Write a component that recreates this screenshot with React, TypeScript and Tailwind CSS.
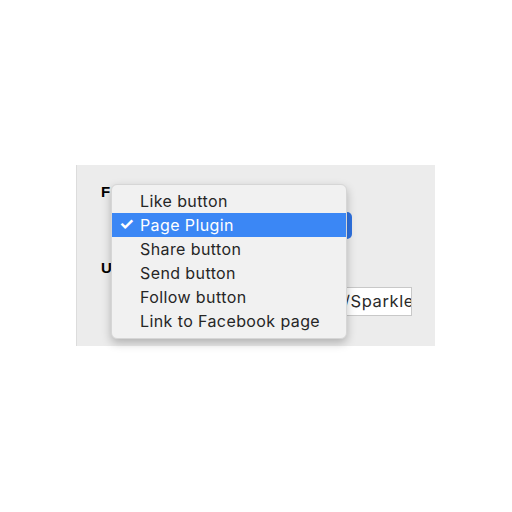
import React from "react";

const items = ["Like button", "Page Plugin", "Share button", "Send button", "Follow button", "Link to Facebook page"];

export default function App() {
  return (
    <div className="w-[512px] h-[512px] bg-white pt-[165px] pl-[76px]" style={{ fontFamily: "Inter, 'Liberation Sans', sans-serif" }}>
      <div className="relative w-[359px] h-[181px] bg-[#ececec] border-l border-[#dcdcdc] pl-[24px] pt-[20px] flex flex-col">
        <div className="flex items-center h-[14px] text-[15px] font-bold text-black" style={{ fontFamily: "'Liberation Sans', sans-serif" }}>
          F
        </div>
        <div className="absolute left-[250px] top-[47px] w-[25px] h-[27px] rounded-[5px] bg-[#2f72e0]" />
        <div className="mt-[62px] flex items-center h-[14px] text-[15px] font-bold text-black" style={{ fontFamily: "'Liberation Sans', sans-serif" }}>
          U
        </div>
        <div className="mt-[12px] ml-[242px] w-[69px] h-[29px] bg-white border border-[#c8c8c8] flex items-center overflow-hidden">
          <span className="text-[16.5px] text-[#2a2a2a] whitespace-nowrap tracking-[0.6px]">/Sparkle</span>
        </div>
        <div className="absolute left-[34px] top-[19px] w-[236px] h-[155px] rounded-[6px] bg-[#f1f1f1] border border-[#d6d6d6] shadow-[0_4px_10px_rgba(0,0,0,0.25)] pt-[4px] flex flex-col">
          {items.map((t, i) => {
            const sel = i === 1;
            return (
              <div key={t} className={`relative h-[24px] flex items-center pl-[28px] text-[16px] tracking-[0.4px] ${sel ? "bg-[#3b87f5] text-white" : "text-[#262626]"}`}>
                {sel && <span className="absolute left-[7px] text-[17px] font-bold">✓</span>}
                {t}
              </div>
            );
          })}
        </div>
      </div>
    </div>
  );
}
